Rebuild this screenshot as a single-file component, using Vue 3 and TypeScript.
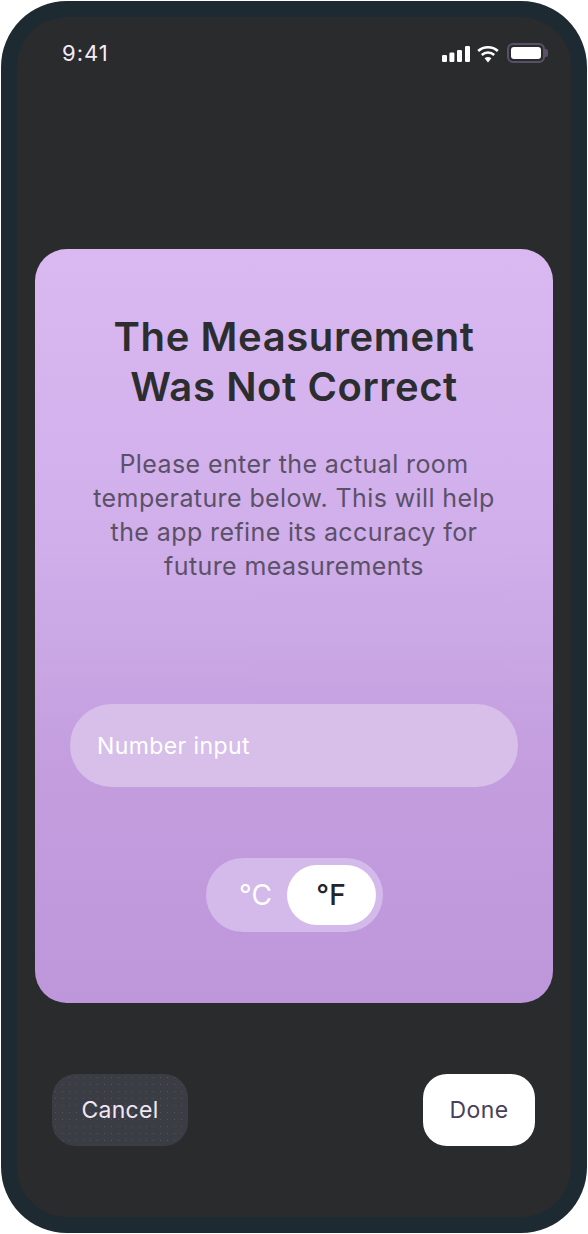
<script setup lang="ts">
const body: string[] = [
  'Please enter the actual room',
  'temperature below. This will help',
  'the app refine its accuracy for',
  'future measurements',
]
</script>

<template>
  <div class="phone">
    <div class="screen">
      <header class="status">
        <span class="time">9:41</span>
        <div class="icons">
          <svg width="28" height="16" viewBox="0 0 28 16" class="signal">
            <rect x="0" y="9" width="5" height="7" rx="1.2" />
            <rect x="7.4" y="6.5" width="5" height="9.5" rx="1.2" />
            <rect x="15" y="4" width="5" height="12" rx="1.2" />
            <rect x="23" y="0" width="5" height="16" rx="1.2" />
          </svg>
          <svg width="22" height="18" viewBox="0 0 22 18" class="wifi">
            <path d="M1.2 6C6.6 .9 15.4 .9 20.8 6" fill="none" stroke="#fff" stroke-width="2.6" />
            <path d="M4.8 10C8.4 6.7 13.6 6.7 17.2 10" fill="none" stroke="#fff" stroke-width="2.6" />
            <path d="M7.6 13.2L11 17.4L14.4 13.2C12.4 11.6 9.6 11.6 7.6 13.2Z" fill="#fff" />
          </svg>
          <div class="battery">
            <div class="level"></div>
            <div class="nub"></div>
          </div>
        </div>
      </header>

      <main class="card">
        <h1 class="title">The Measurement<br />Was Not Correct</h1>
        <p class="body">
          <span v-for="line in body" :key="line" class="line">{{ line }}</span>
        </p>
        <div class="input">Number input</div>
        <div class="toggle">
          <span class="unit off">°C</span>
          <span class="unit active">°F</span>
        </div>
      </main>

      <footer class="actions">
        <button class="btn cancel">Cancel</button>
        <button class="btn done">Done</button>
      </footer>
    </div>
  </div>
</template>

<style>
html, body { background: #fff; }
</style>

<style scoped>
.phone {
  width: 586px;
  height: 1232px;
  margin: 1px;
  box-sizing: border-box;
  padding: 16px;
  background: #1e2a31;
  border-radius: 66px;
  font-family: Inter, "Liberation Sans", sans-serif;
}
.screen {
  height: 100%;
  display: flex;
  flex-direction: column;
  background: #2a2b2d;
  border-radius: 50px;
}
.status {
  height: 72px;
  box-sizing: border-box;
  padding: 0 26px 0 45px;
  display: flex;
  align-items: flex-start;
  justify-content: space-between;
}
.time {
  margin-top: 23px;
  color: #f3ecf8;
  font-size: 22px;
  line-height: 26px;
  font-weight: 400;
  letter-spacing: 1px;
}
.icons {
  margin-top: 26px;
  display: flex;
  align-items: flex-start;
}
.signal { fill: #fff; margin-top: 3px; }
.wifi { margin: 2px 0 0 7px; }
.battery {
  position: relative;
  box-sizing: border-box;
  width: 38px;
  height: 20px;
  margin-left: 8px;
  border: 2px solid #5a4f68;
  border-radius: 6px;
  padding: 2px;
}
.level {
  height: 100%;
  background: #fff;
  border-radius: 3px;
}
.nub {
  position: absolute;
  right: -5px;
  top: 4px;
  width: 3px;
  height: 8px;
  background: #5a4f68;
  border-radius: 0 2px 2px 0;
}
.card {
  margin: 160px 18px 0;
  height: 754px;
  box-sizing: border-box;
  padding: 63px 35px 0;
  display: flex;
  flex-direction: column;
  align-items: center;
  border-radius: 32px;
  background: linear-gradient(180deg, #dab9f2 0%, #cfaeea 40%, #c39dde 70%, #bd97da 100%);
}
.title {
  margin: 0;
  font-size: 40px;
  line-height: 50px;
  font-weight: 600;
  color: #2c2d2f;
  text-align: center;
  letter-spacing: 0.6px;
}
.body {
  margin: 35px 0 0;
  color: #5b5167;
  font-size: 25px;
  line-height: 34px;
  font-weight: 400;
  text-align: center;
  letter-spacing: 0.4px;
}
.line { display: block; white-space: nowrap; }
.input {
  margin-top: 121px;
  width: 100%;
  height: 83px;
  box-sizing: border-box;
  padding: 0 27px;
  display: flex;
  align-items: center;
  border-radius: 42px;
  background: #d7bfea;
  color: #fff;
  font-size: 23px;
  letter-spacing: 0.4px;
}
.toggle {
  margin-top: 71px;
  width: 177px;
  height: 74px;
  box-sizing: border-box;
  padding: 7px;
  display: flex;
  align-items: center;
  border-radius: 37px;
  background: #d4b9eb;
}
.unit {
  flex: 1;
  text-align: center;
  color: #fff;
  font-size: 28px;
}
.unit.off { padding-left: 12px; }
.unit.active {
  flex: none;
  width: 89px;
  height: 60px;
  line-height: 60px;
  border-radius: 30px;
  background: #fff;
  color: #24242c;
  font-weight: 500;
}
.actions {
  margin-top: 71px;
  padding: 0 36px 0 35px;
  display: flex;
  justify-content: space-between;
}
.btn {
  height: 72px;
  border: 0;
  border-radius: 24px;
  font-family: inherit;
  font-size: 23px;
  padding: 0;
}
.cancel {
  width: 136px;
  background-color: #3a3d44;
  background-image: radial-gradient(circle, rgba(140, 140, 155, 0.3) 0.6px, transparent 0.9px);
  background-size: 7px 7px;
  color: #f0e6f6;
  letter-spacing: 0.3px;
}
.done {
  width: 112px;
  background: #fff;
  color: #4a3f5a;
  letter-spacing: 0.4px;
}
</style>
